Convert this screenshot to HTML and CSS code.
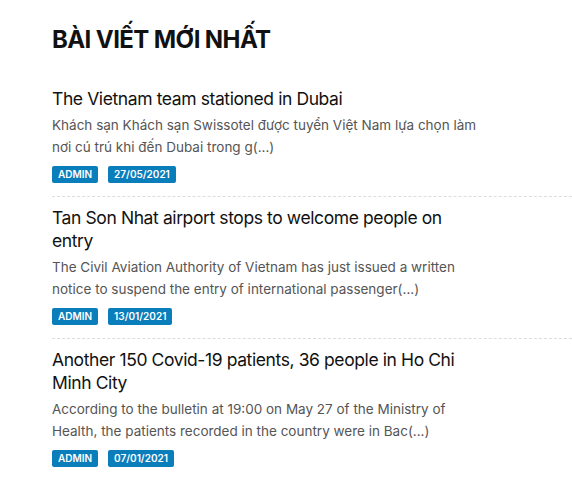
FILE: index.html
```html
<!DOCTYPE html>
<html lang="vi">
<head>
<meta charset="utf-8">
<link rel="stylesheet" href="styles.css">
</head>
<body>
<section class="latest">
  <h2 class="latest-title">BÀI VIẾT MỚI NHẤT</h2>
  <ul class="post-list">
    <li class="post">
      <h3 class="post-title">The Vietnam team stationed in Dubai</h3>
      <p class="post-excerpt">Khách sạn Khách sạn Swissotel được tuyển Việt Nam lựa chọn làm nơi cú trú khi đến Dubai trong g(...)</p>
      <div class="post-meta"><span class="badge">ADMIN</span><span class="badge">27/05/2021</span></div>
    </li>
    <li class="post">
      <h3 class="post-title">Tan Son Nhat airport stops to welcome people on entry</h3>
      <p class="post-excerpt">The Civil Aviation Authority of Vietnam has just issued a written notice to suspend the entry of international passenger(...)</p>
      <div class="post-meta"><span class="badge">ADMIN</span><span class="badge">13/01/2021</span></div>
    </li>
    <li class="post">
      <h3 class="post-title">Another 150 Covid-19 patients, 36 people in Ho Chi Minh City</h3>
      <p class="post-excerpt">According to the bulletin at 19:00 on May 27 of the Ministry of Health, the patients recorded in the country were in Bac(...)</p>
      <div class="post-meta"><span class="badge">ADMIN</span><span class="badge">07/01/2021</span></div>
    </li>
  </ul>
</section>
</body>
</html>
```
FILE: styles.css
```css
html, body {
  margin: 0;
  padding: 0;
  background: #fff;
}
body {
  font-family: Inter, "Noto Sans", sans-serif;
  color: #111;
}
.latest {
  padding: 24px 0 0 52px;
}
.latest-title {
  margin: 0 0 31px;
  font-size: 24px;
  line-height: 32px;
  font-weight: 700;
  color: #111;
  letter-spacing: -0.6px;
}
.post-list {
  list-style: none;
  margin: 0;
  padding: 0;
}
.post {
  padding: 9px 0 13px;
  border-bottom: 1px dashed #ddd;
}
.post:first-child {
  padding-top: 0;
}
.post:last-child {
  border-bottom: none;
}
.post-title {
  margin: 0;
  max-width: 424px;
  font-size: 17.5px;
  line-height: 23px;
  font-weight: 400;
  color: #111;
  letter-spacing: -0.4px;
}
.post-excerpt {
  margin: 5px 0 0;
  max-width: 432px;
  font-size: 13.5px;
  line-height: 21.5px;
  color: #555;
}
.post-meta {
  display: flex;
  gap: 10px;
  margin-top: 8px;
}
.badge {
  background: #0a7dbb;
  color: #fff;
  font-size: 10px;
  font-weight: 600;
  line-height: 17px;
  padding: 0 6px;
  border-radius: 2px;
}
```
